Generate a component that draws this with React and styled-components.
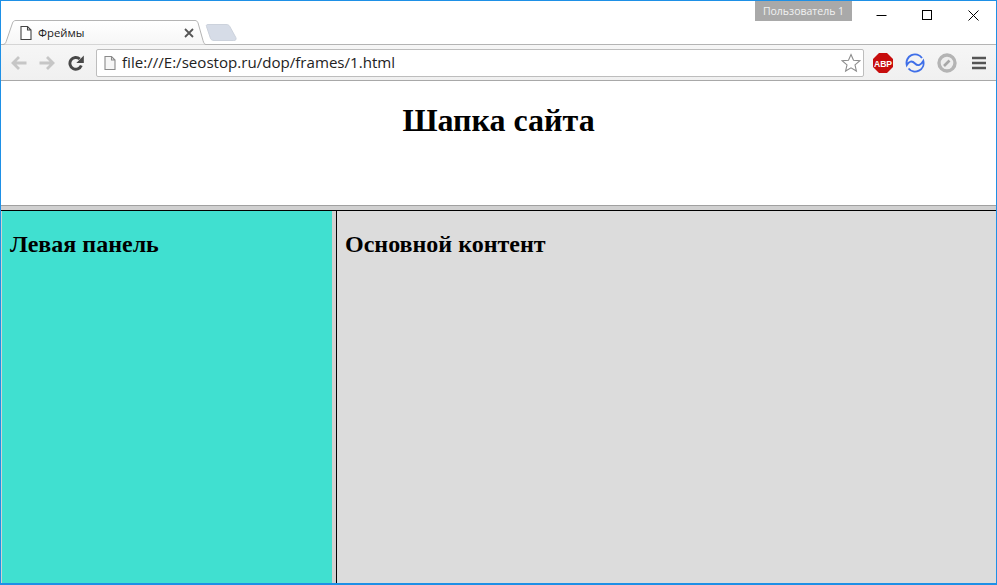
import React from "react";
import styled, { createGlobalStyle } from "styled-components";

const Global = createGlobalStyle`
  html, body { margin: 0; padding: 0; background: #fff; }
  * { box-sizing: border-box; }
`;

const Win = styled.div`
  width: 997px;
  height: 585px;
  display: flex;
  flex-direction: column;
  border: solid #1e90e6;
  border-width: 1px 1px 2px 1px;
  overflow: hidden;
  background: #fff;
`;

const TitleBar = styled.div`
  height: 44px;
  flex: none;
  display: flex;
  justify-content: space-between;
  background: #fff;
  border-bottom: 1px solid #b4b4b4;
`;

const TabStrip = styled.div`
  display: flex;
  align-items: flex-end;
  padding-left: 1px;
`;

const Tab = styled.div`
  position: relative;
  width: 204px;
  height: 25px;
  margin-bottom: -1px;
  display: flex;
  align-items: center;
  padding: 0 12px 0 16px;
  z-index: 1;
`;

const TabShape = styled.svg`
  position: absolute;
  left: 0;
  top: 0;
  z-index: -1;
`;

const TabTitle = styled.span`
  flex: 1;
  margin-left: 4px;
  font: 11.3px "Open Sans", sans-serif;
  color: #222;
`;

const NewTab = styled.svg`
  margin: 0 0 3px -1px;
`;

const WinArea = styled.div`
  display: flex;
  align-items: flex-start;
`;

const UserBadge = styled.div`
  width: 97px;
  height: 20px;
  margin-right: 6px;
  background: #a9a9a9;
  color: #f2f2f2;
  font: 10.5px/20px "Open Sans", sans-serif;
  text-align: center;
`;

const WinButtons = styled.div`
  display: flex;
`;

const WinButton = styled.div`
  width: 46px;
  height: 28px;
  display: flex;
  align-items: center;
  justify-content: center;
`;

const Toolbar = styled.div`
  height: 36px;
  flex: none;
  display: flex;
  align-items: center;
  padding: 0 0 0 9px;
  background: linear-gradient(#f6f6f6, #f0f0f0);
  border-bottom: 1px solid #a8a8a8;
`;

const NavIcon = styled.svg`
  flex: none;
  margin-right: ${(p) => p.$gap || 0}px;
`;

const Omnibox = styled.div`
  flex: none;
  width: 768px;
  height: 28px;
  margin-right: 9px;
  display: flex;
  align-items: center;
  padding: 0 2px 0 5px;
  background: #fff;
  border: 1px solid #bdbdbd;
  border-radius: 2px;
`;

const Url = styled.span`
  flex: 1;
  margin: 0 0 2px 4px;
  font: 15.1px "Open Sans", sans-serif;
  color: #222;
`;

const Extensions = styled.div`
  display: flex;
  align-items: center;
  gap: 12px;
`;

const Page = styled.div`
  flex: 1;
  min-height: 0;
  display: flex;
  flex-direction: column;
  font-family: "Liberation Serif", "Times New Roman", serif;
  color: #000;
  background: #d0d0d0;
`;

const Header = styled.header`
  height: 125px;
  flex: none;
  background: #fff;
  text-align: center;
  border-bottom: 1px solid #a0a0a0;
`;

const HeaderTitle = styled.h1`
  margin: 21px 0 0;
  font-size: 32px;
  line-height: 37px;
  font-weight: bold;
`;

const Frames = styled.div`
  flex: 1;
  min-height: 0;
  margin-top: 4px;
  display: flex;
  border-top: 1px solid #000;
`;

const Pane = styled.section`
  background: ${(p) => p.$bg};
  padding: 20px 8px 0;

  h2 {
    margin: 0;
    font-size: 24px;
    line-height: 27px;
    font-weight: bold;
  }
`;

const LeftPane = styled(Pane)`
  width: 330px;
  margin-left: 1px;
  flex: none;
`;

const MainPane = styled(Pane)`
  flex: 1;
  margin-left: 4px;
  border-left: 1px solid #000;
`;

const FileIcon = ({ stroke = "#555", fill = "#fff" }) => (
  <svg width="16" height="16" viewBox="0 0 16 16" style={{ flex: "none" }}>
    <path d="M3 1.500h6.500L13 5v9.500H3z M9.500 1.500V5H13" fill={fill} stroke={stroke} strokeWidth="1.100" />
  </svg>
);

export default function App() {
  return (
    <>
      <Global />
      <Win>
        <TitleBar>
          <TabStrip>
            <Tab>
              <TabShape width="204" height="25" viewBox="0 0 204 25">
                <defs>
                  <linearGradient id="tabFill" x1="0" y1="0" x2="0" y2="1">
                    <stop offset="0" stopColor="#fff" />
                    <stop offset="1" stopColor="#f6f6f6" />
                  </linearGradient>
                </defs>
                <path
                  d="M0 24.500h1c1.500 0 2.500-1 3.200-3L10.500 3c.6-1.600 1.500-2.500 3.500-2.500H193c1.500 0 2.300.8 3 2.300l5 17.700c.8 2.700 1.500 4 3 4"
                  fill="url(#tabFill)"
                  stroke="#b4b4b4"
                />
              </TabShape>
              <FileIcon stroke="#444" />
              <TabTitle>Фреймы</TabTitle>
              <svg width="10" height="10" viewBox="0 0 10 10">
                <path d="M1 1l8 8M9 1l-8 8" stroke="#555" strokeWidth="1.800" />
              </svg>
            </Tab>
            <NewTab width="33" height="17" viewBox="0 0 33 17">
              <path d="M3 .5h18c2 0 3 .6 3.800 2l6 11c.8 2 0 3-2 3H9c-1.800 0-2.800-.7-3.500-2L1.500 2.500C1 1.200 1.500.5 3 .5z" fill="#d6dce7" stroke="#ccd2dc" />
            </NewTab>
          </TabStrip>
          <WinArea>
            <UserBadge>Пользователь 1</UserBadge>
            <WinButtons>
              <WinButton>
                <svg width="11" height="11" viewBox="0 0 11 11">
                  <path d="M.5 5.500h10" stroke="#000" />
                </svg>
              </WinButton>
              <WinButton>
                <svg width="11" height="11" viewBox="0 0 11 11">
                  <rect x=".5" y=".5" width="9" height="9" fill="none" stroke="#000" />
                </svg>
              </WinButton>
              <WinButton>
                <svg width="11" height="11" viewBox="0 0 11 11">
                  <path d="M.5.500l10 10M10.500.500l-10 10" stroke="#000" />
                </svg>
              </WinButton>
            </WinButtons>
          </WinArea>
        </TitleBar>
        <Toolbar>
          <NavIcon $gap={10} width="18" height="16" viewBox="0 0 18 16">
            <path d="M16.500 8H3M9 2L3 8l6 6" fill="none" stroke="#c6c6c6" strokeWidth="2.800" />
          </NavIcon>
          <NavIcon $gap={12} width="18" height="16" viewBox="0 0 18 16">
            <path d="M1.500 8H15M9 2l6 6-6 6" fill="none" stroke="#c6c6c6" strokeWidth="2.800" />
          </NavIcon>
          <NavIcon $gap={12} width="16" height="16" viewBox="0 0 16 16">
            <path d="M13.300 10.500A5.900 5.900 0 1 1 11.800 4" fill="none" stroke="#484848" strokeWidth="2.900" />
            <path d="M15.800 .5v7.500H8.300z" fill="#484848" />
          </NavIcon>
          <Omnibox>
            <FileIcon stroke="#8a8a8a" fill="#f6f6f6" />
            <Url>file:///E:/seostop.ru/dop/frames/1.html</Url>
            <svg width="20" height="20" viewBox="0 0 20 20">
              <path
                d="M10 1.500l2.500 5.700 6.200.6-4.700 4.100 1.400 6.100-5.400-3.200-5.400 3.200 1.400-6.100L1.300 7.800l6.200-.6z"
                fill="#fff"
                stroke="#8c8c8c"
                strokeWidth="1.100"
              />
            </svg>
          </Omnibox>
          <Extensions>
            <svg width="20" height="20" viewBox="0 0 20 20">
              <path d="M6 0h8l6 6v8l-6 6H6l-6-6V6z" fill="#c70d0d" />
              <text x="10" y="13.500" textAnchor="middle" fontFamily="'Liberation Sans', sans-serif" fontWeight="bold" fontSize="8.600" fill="#fff">
                ABP
              </text>
            </svg>
            <svg width="20" height="20" viewBox="0 0 20 20">
              <path
                d="M17 5A8.500 8.500 0 0 0 1.800 12C4 8 7 7.500 10 10.500S16 12 18.300 8A8.500 8.500 0 0 1 3.500 15.500"
                fill="none"
                stroke="#3f6fe8"
                strokeWidth="1.900"
              />
            </svg>
            <svg width="20" height="20" viewBox="0 0 20 20">
              <circle cx="10" cy="10" r="8" fill="#eee" stroke="#b4b4b4" strokeWidth="3.400" />
              <path d="M7 13l5.500-5.500" stroke="#a8a8a8" strokeWidth="2.600" />
            </svg>
            <svg width="14" height="14" viewBox="0 0 14 14" style={{ marginLeft: 3 }}>
              <path d="M0 2h14M0 7h14M0 12h14" stroke="#555" strokeWidth="2.600" />
            </svg>
          </Extensions>
        </Toolbar>
        <Page>
          <Header>
            <HeaderTitle>Шапка сайта</HeaderTitle>
          </Header>
          <Frames>
            <LeftPane $bg="#40e0d0">
              <h2>Левая панель</h2>
            </LeftPane>
            <MainPane $bg="#dcdcdc">
              <h2>Основной контент</h2>
            </MainPane>
          </Frames>
        </Page>
      </Win>
    </>
  );
}
